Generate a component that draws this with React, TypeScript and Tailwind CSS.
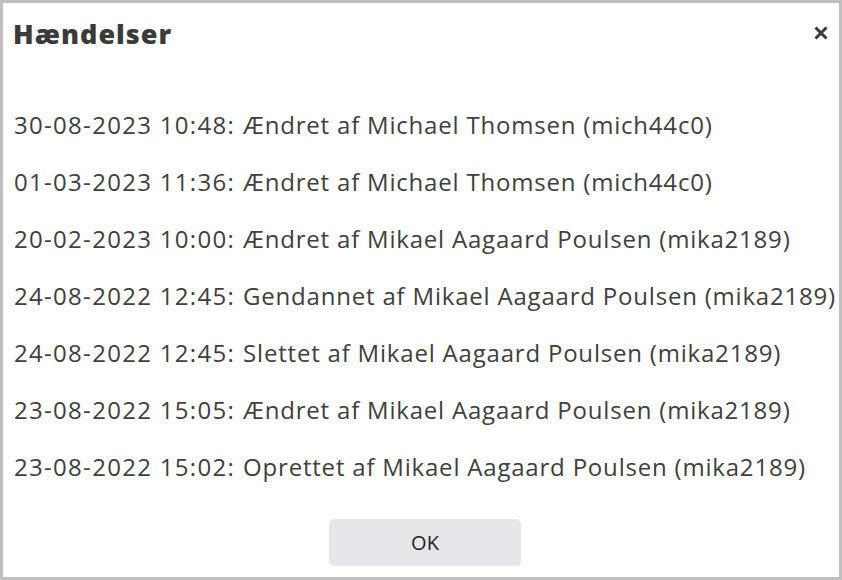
const events = [
  { when: '30-08-2023 10:48', text: 'Ændret af Michael Thomsen (mich44c0)' },
  { when: '01-03-2023 11:36', text: 'Ændret af Michael Thomsen (mich44c0)' },
  { when: '20-02-2023 10:00', text: 'Ændret af Mikael Aagaard Poulsen (mika2189)' },
  { when: '24-08-2022 12:45', text: 'Gendannet af Mikael Aagaard Poulsen (mika2189)' },
  { when: '24-08-2022 12:45', text: 'Slettet af Mikael Aagaard Poulsen (mika2189)' },
  { when: '23-08-2022 15:05', text: 'Ændret af Mikael Aagaard Poulsen (mika2189)' },
  { when: '23-08-2022 15:02', text: 'Oprettet af Mikael Aagaard Poulsen (mika2189)' },
];

export default function App() {
  return (
    <div
      className="w-[842px] h-[580px] bg-white border-[3px] border-[#bfbfbf] flex flex-col text-[#404040]"
      style={{ fontFamily: '"Open Sans", "Noto Sans", sans-serif' }}
    >
      {/* Header */}
      <div className="flex items-center justify-between pl-[10px] pr-[10px] h-[60px]">
        <h1 className="text-[27px] font-extrabold text-[#3a3a3a] leading-none tracking-[1px]">Hændelser</h1>
        <button className="text-[#3a3a3a]" aria-label="Luk">
          <svg width="16" height="16" viewBox="0 0 16 16">
            <path d="M2.5 2.5 L13.5 13.5 M13.5 2.5 L2.5 13.5" stroke="currentColor" strokeWidth="3" strokeLinecap="butt" />
          </svg>
        </button>
      </div>

      {/* Events */}
      <div className="flex flex-col pl-[11px] pt-[33px]">
        {events.map((e, i) => (
          <div key={i} className="h-[57px] flex items-center text-[24px] whitespace-pre">
            <span className="tracking-[1.3px]">{e.when}:</span>
            <span className="tracking-[0.8px] ml-[8px]">{e.text}</span>
          </div>
        ))}
      </div>

      {/* Footer */}
      <div className="flex-1 flex items-end justify-center pl-[8px] pb-[11px]">
        <button className="w-[192px] h-[47px] rounded-[5px] bg-[#e5e7eb] text-[20px] text-[#222]">OK</button>
      </div>
    </div>
  );
}
